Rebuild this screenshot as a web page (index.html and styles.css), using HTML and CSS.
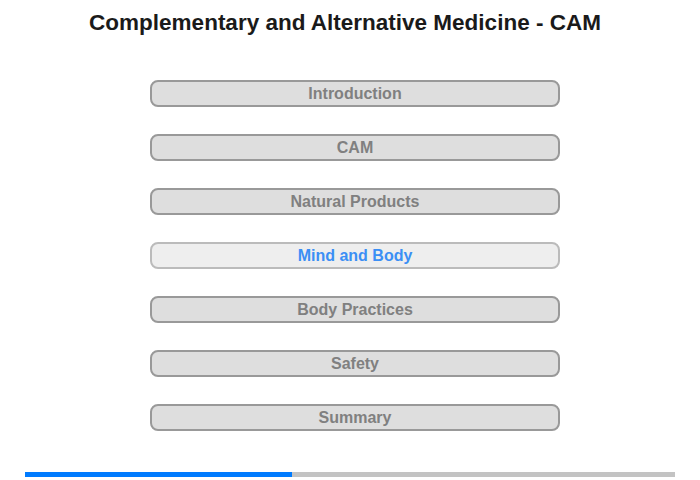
FILE: index.html
```html
<!DOCTYPE html>
<html>
<head>
<meta charset="utf-8">
<link rel="stylesheet" href="styles.css">
</head>
<body>
<div class="page">
  <h1 class="title">Complementary and Alternative Medicine - CAM</h1>
  <nav class="menu">
    <div class="item">Introduction</div>
    <div class="item">CAM</div>
    <div class="item">Natural Products</div>
    <div class="item active">Mind and Body</div>
    <div class="item">Body Practices</div>
    <div class="item">Safety</div>
    <div class="item">Summary</div>
  </nav>
  <div class="progress"><div class="fill" style="width:41%"></div></div>
</div>
</body>
</html>
```
FILE: styles.css
```css
html, body { margin: 0; padding: 0; background: #fff; }
.page {
  width: 700px; height: 480px;
  font-family: "Liberation Sans", Arial, sans-serif;
  display: flex; flex-direction: column;
}
.title {
  margin: 9px 0 0 0;
  height: 27px;
  line-height: 27px;
  font-size: 22.5px;
  font-weight: bold;
  color: #1a1a1a;
  text-align: center;
  padding-right: 10px;
}
.menu {
  margin: 43.5px 0 0 150px;
  width: 410px;
  display: flex; flex-direction: column;
  gap: 27px;
}
.item {
  box-sizing: border-box;
  height: 27px;
  border: 2px solid #999;
  border-radius: 8px;
  background: #dedede;
  color: #808080;
  font-size: 16px;
  font-weight: bold;
  text-align: center;
  line-height: 23px;
}
.item.active {
  border-color: #bbb;
  background: #eee;
  color: #3b8ff5;
}
.progress {
  margin: 41.5px 0 0 25px;
  width: 650px;
  height: 5px;
  background: #c3c3c3;
}
.fill { height: 100%; background: #007bff; }
```
